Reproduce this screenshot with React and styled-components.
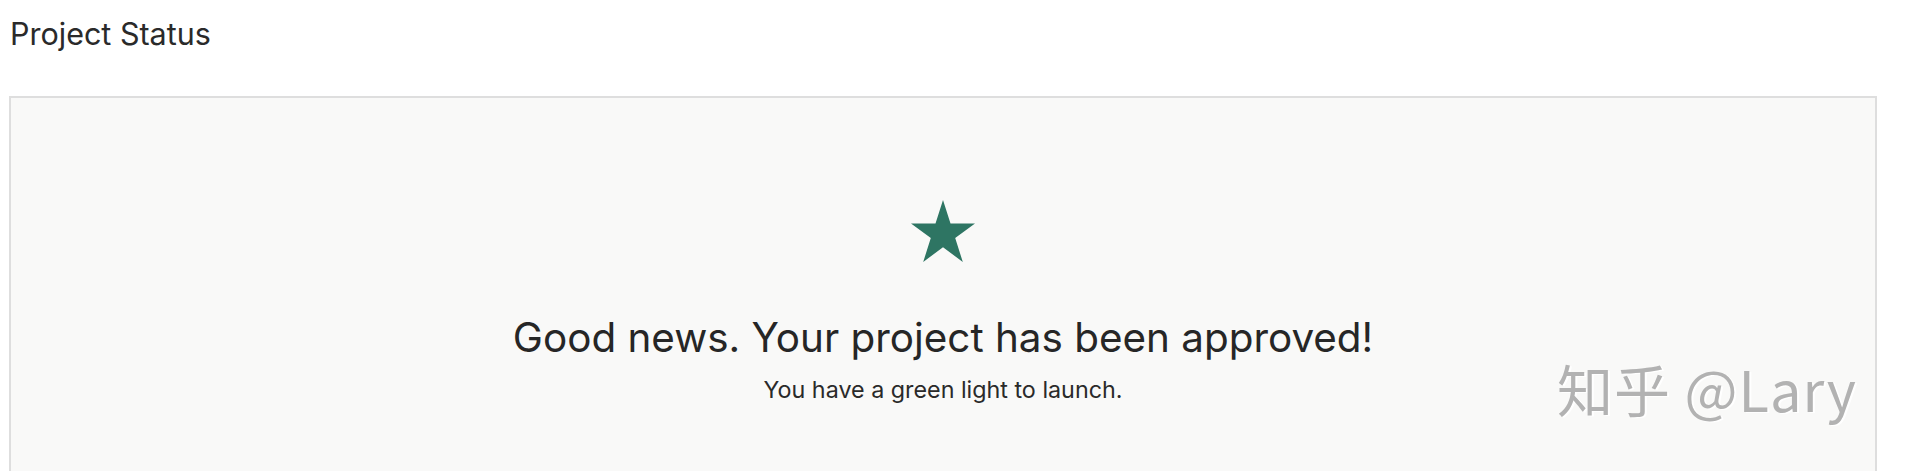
import styled, { createGlobalStyle } from "styled-components";

const GlobalStyle = createGlobalStyle`
  html, body {
    margin: 0;
    padding: 0;
    background: #ffffff;
    font-family: Inter, "Noto Sans", sans-serif;
    color: #262626;
  }
`;

export default function App() {
  return (
    <>
      <GlobalStyle />
      <Page>
        <Title>Project Status</Title>
        <StatusCard>
          <Star />
          <Heading>Good news. Your project has been approved!</Heading>
          <Subline>You have a green light to launch.</Subline>
          <Watermark>知乎 @Lary</Watermark>
        </StatusCard>
      </Page>
    </>
  );
}

function Star() {
  return (
    <StarIcon viewBox="0 0 64 62" aria-hidden="true">
      <polygon
        points="32,0 39.5,23.5 64,23.5 44.2,38 51.8,62 32,47.2 12.2,62 19.8,38 0,23.5 24.5,23.5"
        fill="#2e7563"
      />
    </StarIcon>
  );
}

const Page = styled.div`
  padding: 14px 28px 0 9px;
  height: 471px;
  box-sizing: border-box;
  overflow: hidden;
`;

const Title = styled.h2`
  margin: 0 0 0 1px;
  font-size: 30.5px;
  font-weight: 400;
  line-height: 40px;
  color: #2a2a2a;
`;

const StatusCard = styled.section`
  position: relative;
  margin-top: 42px;
  border: 2px solid #dedede;
  background: #f9f9f8;
  height: 420px;
  display: flex;
  flex-direction: column;
  align-items: center;
  padding-top: 102px;
  box-sizing: border-box;
`;

const StarIcon = styled.svg`
  width: 64px;
  height: 62px;
  display: block;
`;

const Heading = styled.h1`
  margin: 51px 0 0;
  font-size: 40.4px;
  font-weight: 400;
  line-height: 50px;
  color: #262626;
`;

const Subline = styled.p`
  margin: 12px 0 0;
  font-size: 23.3px;
  line-height: 30px;
  color: #2a2a2a;
`;

const Watermark = styled.div`
  position: absolute;
  right: 18px;
  top: 258px;
  font-family: "Noto Sans CJK SC", "Noto Sans", sans-serif;
  font-size: 56px;
  line-height: 64px;
  color: #b2b2b2;
  text-shadow: 2px 1px 0 #ffffff;
  letter-spacing: 1px;
`;
